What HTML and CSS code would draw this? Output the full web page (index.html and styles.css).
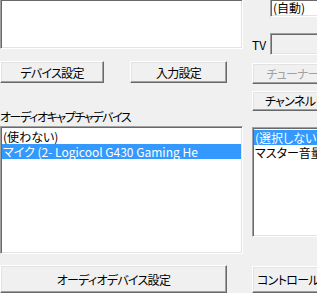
FILE: index.html
```html
<!DOCTYPE html>
<html lang="ja">
<head>
    <meta charset="UTF-8">
    <title>オーディオ設定</title>
    <link rel="stylesheet" href="styles.css">
</head>
<body>
    <div class="window">
        <div class="col col-left">
            <div class="sunken listbox listbox-top"></div>

            <div class="btn-row">
                <button class="btn btn-device">デバイス設定</button>
                <button class="btn btn-input">入力設定</button>
            </div>

            <div class="label">オーディオキャプチャデバイス</div>
            <ul class="sunken listbox listbox-capture">
                <li>(使わない)</li>
                <li class="selected">マイク (2- Logicool G430 Gaming He</li>
            </ul>

            <button class="btn btn-audio">オーディオデバイス設定</button>
        </div>

        <div class="col col-right">
            <div class="field-row field-row-top">
                <div class="sunken field">(自動)</div>
            </div>
            <div class="field-row field-row-tv">
                <span class="field-label">TV</span>
                <div class="sunken field field-disabled"></div>
            </div>

            <button class="btn btn-wide btn-tuner" disabled>チューナー設定</button>
            <button class="btn btn-wide btn-channel">チャンネルリスト</button>

            <ul class="sunken listbox listbox-mixer">
                <li class="selected">(選択しない)</li>
                <li>マスター音量</li>
            </ul>

            <button class="btn btn-wide btn-control">コントロールパネル</button>
        </div>
    </div>
</body>
</html>
```

FILE: styles.css
```css
body {
    margin: 0;
    background-color: #f0f0f0;
    font-family: "Noto Sans CJK JP", sans-serif;
    font-size: 12px;
    font-feature-settings: "palt";
    color: #000;
}

.window {
    display: flex;
    gap: 9px;
    width: 317px;
    height: 293px;
    overflow: hidden;
}

.col {
    display: flex;
    flex-direction: column;
    flex: none;
}

.col-left {
    width: 243px;
}

.col-right {
    width: 120px;
}

/* sunken 3d edge, like a classic listbox */
.sunken {
    background-color: #fff;
    border: 1px solid;
    border-color: #a0a0a0 #fff #fff #a0a0a0;
    box-shadow: inset 1px 1px #696969, inset -1px -1px #e3e3e3;
    box-sizing: border-box;
}

.listbox {
    margin: 0;
    padding: 2px 1px 1px 1px;
    list-style: none;
    overflow: hidden;
}

.listbox li {
    height: 15px;
    line-height: 15px;
    padding-left: 1px;
    white-space: nowrap;
}

.listbox li.selected {
    background-color: #3399ff;
    color: #fff;
}

.listbox-top {
    height: 50px;
    border-top: none;
}

.listbox-capture {
    height: 130px;
    margin-top: 2px;
}

.listbox-mixer {
    height: 112px;
    margin-top: 16px;
}

.btn {
    font: inherit;
    font-feature-settings: "palt";
    letter-spacing: -0.7px;
    color: #000;
    background-color: #f0f0f0;
    border: 1px solid;
    border-color: #fff #696969 #696969 #fff;
    box-shadow: inset -1px -1px #a0a0a0, inset 1px 1px #e3e3e3;
    padding: 0;
    height: 22px;
    box-sizing: border-box;
    white-space: nowrap;
}

.btn:disabled {
    color: #a0a0a0;
}

.btn-row {
    display: flex;
    justify-content: space-between;
    margin-top: 12px;
    width: 227px;
}

.btn-device {
    width: 104px;
}

.btn-input {
    width: 97px;
}

.label {
    margin-top: 26px;
    height: 15px;
    line-height: 15px;
    letter-spacing: -1.4px;
    white-space: nowrap;
}

.btn-audio {
    width: 227px;
    height: 28px;
    margin-top: 11px;
}

.btn-wide {
    width: 104px;
    height: 21px;
}

.btn-tuner {
    margin-top: 8px;
}

.btn-channel {
    margin-top: 7px;
}

.btn-control {
    height: 28px;
    margin-top: 29px;
}

.field-row {
    display: flex;
    align-items: center;
}

.field-row-top {
    height: 17px;
    padding-left: 18px;
}

.field-row-top .field {
    height: 17px;
    line-height: 15px;
    padding-left: 2px;
    border-top: none;
}

.field-row-tv {
    margin-top: 16px;
    height: 22px;
}

.field-label {
    width: 18px;
}

.field {
    flex: 1;
    height: 22px;
}

.field-disabled {
    background-color: #f0f0f0;
}
```
